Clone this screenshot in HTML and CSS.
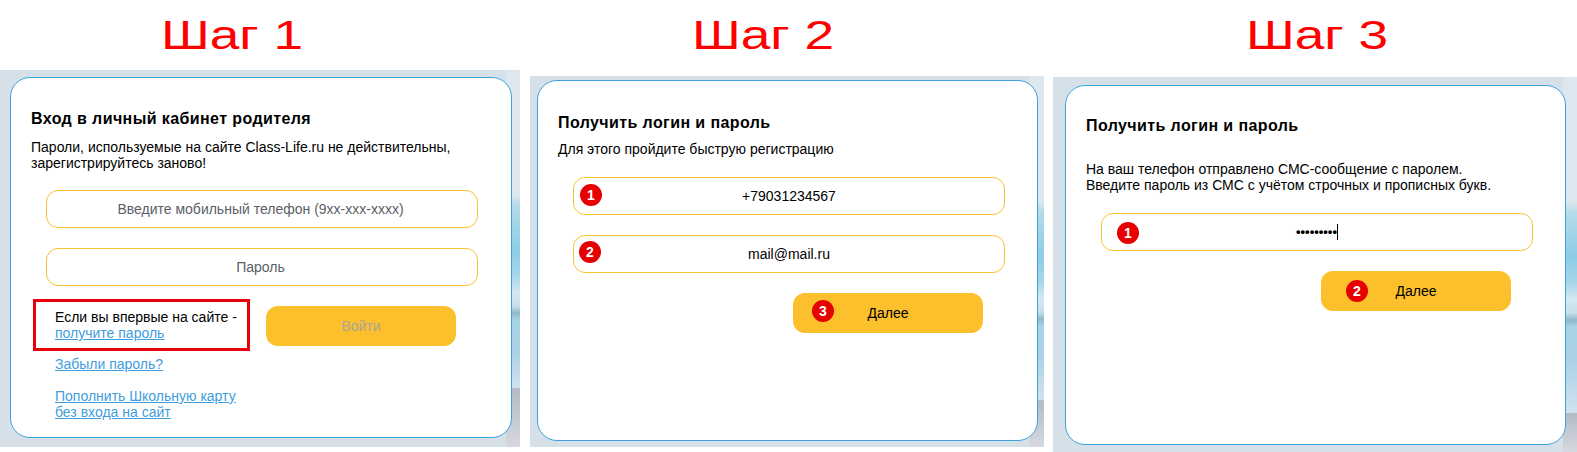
FILE: index.html
```html
<!DOCTYPE html>
<html lang="ru">
<head>
<meta charset="utf-8">
<title>Шаги регистрации</title>
<link rel="stylesheet" href="styles.css">
</head>
<body>
<main class="steps">
  <section class="step step-one">
    <h1 class="step-heading"><span class="step-label">Шаг 1</span></h1>
    <div class="panel">
      <div class="card">
        <h2 class="card-title">Вход в личный кабинет родителя</h2>
        <p class="card-text">Пароли, используемые на сайте Class-Life.ru не действительны,<br>зарегистрируйтесь заново!</p>
        <div class="field field-placeholder">Введите мобильный телефон (9xx-xxx-xxxx)</div>
        <div class="field field-placeholder field-next">Пароль</div>
        <div class="login-row">
          <div class="login-links">
            <div class="highlight">Если вы впервые на сайте -<br><a href="#">получите пароль</a></div>
            <a class="link-forgot" href="#">Забыли пароль?</a>
            <a class="link-card" href="#">Пополнить Школьную карту<br>без входа на сайт</a>
          </div>
          <button class="btn btn-disabled" type="button">Войти</button>
        </div>
      </div>
    </div>
  </section>

  <section class="step step-two">
    <h1 class="step-heading"><span class="step-label">Шаг 2</span></h1>
    <div class="panel">
      <div class="card">
        <h2 class="card-title">Получить логин и пароль</h2>
        <p class="card-text">Для этого пройдите быструю регистрацию</p>
        <div class="field"><span class="badge badge-field">1</span>+79031234567</div>
        <div class="field field-next"><span class="badge badge-field badge-second">2</span>mail@mail.ru</div>
        <button class="btn btn-next" type="button"><span class="badge badge-btn">3</span>Далее</button>
      </div>
    </div>
  </section>

  <section class="step step-three">
    <h1 class="step-heading"><span class="step-label">Шаг 3</span></h1>
    <div class="panel">
      <div class="card">
        <h2 class="card-title">Получить логин и пароль</h2>
        <p class="card-text">На ваш телефон отправлено СМС-сообщение с паролем.<br>Введите пароль из СМС с учётом строчных и прописных букв.</p>
        <div class="field"><span class="badge badge-field">1</span><span class="dots">•••••••••</span><span class="caret"></span></div>
        <button class="btn btn-next" type="button"><span class="badge badge-btn">2</span>Далее</button>
      </div>
    </div>
  </section>
</main>
</body>
</html>
```
FILE: styles.css
```css
* { box-sizing: border-box; }

html, body {
  margin: 0;
  height: 452px;
  background: #fff;
  overflow: hidden;
}

body {
  font-family: "Liberation Sans", Arial, sans-serif;
  font-size: 14px;
  line-height: 16px;
  color: #000;
}

.steps {
  display: flex;
  height: 452px;
}

.step {
  display: flex;
  flex-direction: column;
}

.step-one { width: 520px; padding-bottom: 5px; }
.step-two { width: 514px; margin-left: 10px; padding-bottom: 5px; }
.step-three { width: 524px; margin-left: 9px; }

.step-heading {
  margin: 0;
  height: 77px;
  padding-top: 13px;
  font-size: 40px;
  line-height: 44px;
  font-weight: 400;
  color: #ff0000;
}

.step-one .step-heading { height: 70px; padding-left: 161px; }
.step-two .step-heading { height: 76px; padding-left: 162px; }
.step-three .step-heading { padding-left: 193px; }

.step-label {
  display: inline-block;
  white-space: nowrap;
  transform: scaleX(1.33);
  transform-origin: left center;
}

.panel {
  --fade: 318px;
  flex: 1;
  display: flex;
  padding: 7px 8px 9px 10px;
  background:
    linear-gradient(to bottom,
      #dde7ef 0, #dde7ef 125px, #b6dcea 135px, #8ccde6 180px, #a5d6ea 205px,
      #d3e8f2 222px, #c8dfea 236px, #8fb8ca 243px, #a8d4e8 250px, #a9d0e6 280px,
      #d0e2ee var(--fade), #b3bac4 var(--fade), #d6d8e1 100%) right top / 14px 100% no-repeat,
    #d5e0e9;
}

.step-two .panel { --fade: 324px; padding: 4px 6px 6px 7px; }
.step-three .panel { --fade: 336px; padding: 8px 11px 7px 12px; }

.card {
  flex: 1;
  background: #fff;
  border: 1px solid #3ea2dd;
  border-radius: 20px;
  padding: 32px 20px 0;
}

.step-two .card { padding-top: 33px; }
.step-three .card { padding-top: 31px; }

.card-title {
  margin: 0;
  font-size: 16px;
  line-height: 18px;
  font-weight: 700;
  letter-spacing: 0.4px;
}

.card-text {
  margin: 11px 0 0;
  font-size: 14px;
  line-height: 16px;
}

.step-two .card-text { margin-top: 9px; }
.step-three .card-text { margin-top: 26px; }

.field {
  position: relative;
  display: flex;
  align-items: center;
  justify-content: center;
  width: 432px;
  height: 38px;
  margin: 19px 0 0 15px;
  background: #fff;
  border: 1px solid #fdc02f;
  border-radius: 12px;
  font-size: 14px;
}

.field-placeholder { color: #5b6068; padding-right: 3px; }
.field-next { margin-top: 20px; }

.step-two .field { margin-top: 20px; }
.step-three .field { margin-top: 20px; }

.badge {
  position: absolute;
  display: flex;
  align-items: center;
  justify-content: center;
  width: 22px;
  height: 22px;
  border-radius: 50%;
  background: #e60000;
  color: #fff;
  font-size: 14px;
  font-weight: 700;
}

.badge-field { left: 6px; top: 6px; }
.badge-second { left: 5px; top: 5px; }
.step-three .badge-field { left: 15px; top: 8px; }
.badge-btn { left: 19px; top: 7px; }
.step-three .badge-btn { left: 25px; top: 9px; }

.dots { font-size: 13px; font-weight: 700; }
.caret { display: block; width: 1px; height: 16px; background: #000; }

.login-row {
  display: flex;
  margin-left: 2px;
}

.login-links {
  width: 217px;
  display: flex;
  flex-direction: column;
}

.highlight {
  width: 217px;
  height: 52px;
  margin-top: 13px;
  padding: 7px 0 0 19px;
  border: 3px solid #e8000b;
}

a { color: #3f9ddd; text-decoration: underline; }

.link-forgot { margin: 5px 0 0 22px; }
.link-card { margin: 16px 0 0 22px; }

.btn {
  position: relative;
  display: block;
  width: 190px;
  height: 40px;
  padding: 0;
  border: 0;
  border-radius: 12px;
  background: #fdc02d;
  font: inherit;
  color: #000;
}

.btn-disabled {
  margin: 20px 0 0 16px;
  color: #a8a49a;
}

.btn-next { margin: 20px 0 0 235px; }
```
